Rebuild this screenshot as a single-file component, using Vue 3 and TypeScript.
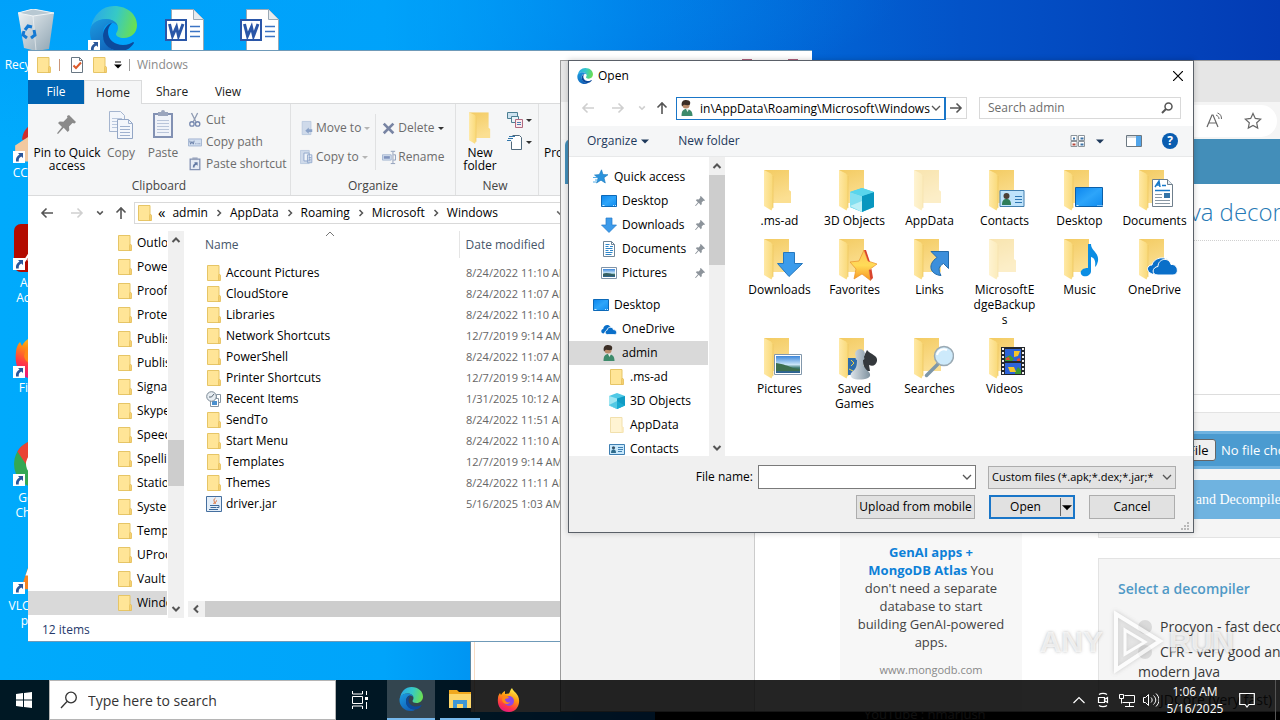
<script setup lang="ts">
import { ref } from 'vue'

interface FileRow { name: string; date: string; icon: string }
interface TreeRow { name: string; icon: string; level: number; pinned?: boolean; selected?: boolean; spaced?: boolean }
interface Tile { name: string; overlay?: string; pale?: boolean }
interface Shortcut { id: string; icon: string; label: string }

const address = ref('in\\AppData\\Roaming\\Microsoft\\Windows')
const query = ref('')
const fileName = ref('')
const search = ref('')

const shortcuts: Shortcut[] = [
  { id: 'bin', icon: 'bin', label: 'Recycle Bin' },
  { id: 'edge-link', icon: 'edge', label: '' },
  { id: 'word-a', icon: 'word', label: '' },
  { id: 'word-b', icon: 'word', label: '' },
  { id: 'ccleaner', icon: 'ccleaner', label: 'CCleaner' },
  { id: 'acrobat', icon: 'acrobat', label: 'Adobe Acrobat' },
  { id: 'firefox-link', icon: 'firefox', label: 'Firefox' },
  { id: 'chrome', icon: 'chrome', label: 'Google Chrome' },
  { id: 'vlc', icon: 'vlc', label: 'VLC media player' },
]

const crumbs = ['admin', 'AppData', 'Roaming', 'Microsoft', 'Windows']

const folders = ['Outlook', 'PowerPoint', 'Proof', 'Protect', 'Publisher', 'Publisher Building', 'Signatures', 'Skype', 'Speech', 'Spelling', 'Stationery', 'SystemCertificates', 'Templates', 'UProof', 'Vault', 'Windows']

const files: FileRow[] = [
  { name: 'Account Pictures', date: '8/24/2022 11:10 AM', icon: 'folder' },
  { name: 'CloudStore', date: '8/24/2022 11:07 AM', icon: 'folder' },
  { name: 'Libraries', date: '8/24/2022 11:10 AM', icon: 'folder' },
  { name: 'Network Shortcuts', date: '12/7/2019 9:14 AM', icon: 'folder' },
  { name: 'PowerShell', date: '8/24/2022 11:07 AM', icon: 'folder' },
  { name: 'Printer Shortcuts', date: '12/7/2019 9:14 AM', icon: 'folder' },
  { name: 'Recent Items', date: '1/31/2025 10:12 AM', icon: 'recent' },
  { name: 'SendTo', date: '8/24/2022 11:51 AM', icon: 'folder' },
  { name: 'Start Menu', date: '8/24/2022 11:10 AM', icon: 'folder' },
  { name: 'Templates', date: '12/7/2019 9:14 AM', icon: 'folder' },
  { name: 'Themes', date: '8/24/2022 11:11 AM', icon: 'folder' },
  { name: 'driver.jar', date: '5/16/2025 1:03 AM', icon: 'jar' },
]

const places: TreeRow[] = [
  { name: 'Quick access', icon: 'quick', level: 0 },
  { name: 'Desktop', icon: 'screen', level: 1, pinned: true },
  { name: 'Downloads', icon: 'down', level: 1, pinned: true },
  { name: 'Documents', icon: 'doc', level: 1, pinned: true },
  { name: 'Pictures', icon: 'photo', level: 1, pinned: true },
  { name: 'Desktop', icon: 'screen', level: 0, spaced: true },
  { name: 'OneDrive', icon: 'cloud', level: 1 },
  { name: 'admin', icon: 'user', level: 1, selected: true },
  { name: '.ms-ad', icon: 'folder', level: 2 },
  { name: '3D Objects', icon: 'cube', level: 2 },
  { name: 'AppData', icon: 'folder-pale', level: 2 },
  { name: 'Contacts', icon: 'contact', level: 2 },
]

const tiles: Tile[] = [
  { name: '.ms-ad' },
  { name: '3D Objects', overlay: 'o-cube' },
  { name: 'AppData', pale: true },
  { name: 'Contacts', overlay: 'o-contact' },
  { name: 'Desktop', overlay: 'o-screen' },
  { name: 'Documents', overlay: 'o-doc' },
  { name: 'Downloads', overlay: 'o-down' },
  { name: 'Favorites', overlay: 'o-star' },
  { name: 'Links', overlay: 'o-link' },
  { name: 'MicrosoftEdgeBackups', pale: true },
  { name: 'Music', overlay: 'o-music' },
  { name: 'OneDrive', overlay: 'o-cloud' },
  { name: 'Pictures', overlay: 'o-photo' },
  { name: 'Saved Games', overlay: 'o-games' },
  { name: 'Searches', overlay: 'o-search' },
  { name: 'Videos', overlay: 'o-film' },
]
</script>

<template>
  <svg class="sprite" aria-hidden="true">
    <defs>
      <linearGradient id="gFlap" x1="0" y1="0" x2="1" y2="0"><stop offset="0" stop-color="#ffe9a6" /><stop offset="1" stop-color="#f9d978" /></linearGradient>
      <linearGradient id="gBack" x1="0" y1="0" x2="0.3" y2="1"><stop offset="0" stop-color="#f3cb62" /><stop offset="1" stop-color="#fbdf92" /></linearGradient>
      <linearGradient id="gEdgeTop" x1="0" y1="0.4" x2="1" y2="0.6"><stop offset="0" stop-color="#2aa9e8" /><stop offset="0.5" stop-color="#36c9c6" /><stop offset="1" stop-color="#6de04c" /></linearGradient>
      <linearGradient id="gEdgeLow" x1="0" y1="0" x2="0.6" y2="1"><stop offset="0" stop-color="#1b9de2" /><stop offset="1" stop-color="#1160b7" /></linearGradient>
      <linearGradient id="gFox" x1="0.7" y1="0" x2="0.3" y2="1"><stop offset="0" stop-color="#fff44f" /><stop offset="0.4" stop-color="#ff980e" /><stop offset="0.75" stop-color="#ff3647" /><stop offset="1" stop-color="#e31587" /></linearGradient>
      <linearGradient id="gScreen" x1="0" y1="0" x2="1" y2="1"><stop offset="0" stop-color="#0c86ee" /><stop offset="0.5" stop-color="#2da5fa" /><stop offset="1" stop-color="#108bee" /></linearGradient>
      <linearGradient id="gPhoto" x1="0" y1="0" x2="0" y2="1"><stop offset="0" stop-color="#3c86da" /><stop offset="0.5" stop-color="#c9e5f8" /><stop offset="0.7" stop-color="#3d7b70" /><stop offset="1" stop-color="#2b5f96" /></linearGradient>
      <linearGradient id="gStar" x1="0" y1="0" x2="0" y2="1"><stop offset="0" stop-color="#ffc35a" /><stop offset="0.5" stop-color="#ffdc58" /><stop offset="1" stop-color="#f7931e" /></linearGradient>
      <linearGradient id="gPawn" x1="0" y1="0" x2="1" y2="0"><stop offset="0" stop-color="#dde4ea" /><stop offset="1" stop-color="#7f929f" /></linearGradient>
      <linearGradient id="gBin" x1="0" y1="0" x2="1" y2="1"><stop offset="0" stop-color="#f1f4f6" /><stop offset="1" stop-color="#8ea4b2" /></linearGradient>
    </defs>

    <symbol id="folder" viewBox="0 0 16 16"><path d="M1.500.5h11.500v9l1 1v5h-12.500z" fill="#ffe597" stroke="#e6c566" /><path d="M12.500 15.500v-5l1-1.500 1 1.500v5z" fill="#f5d071" stroke="#e0b851" stroke-width=".6" /></symbol>
    <symbol id="folder-pale" viewBox="0 0 16 16"><path d="M1.500.5h11.500v9l1 1v5h-12.500z" fill="#fff4d3" stroke="#f1e0ad" /><path d="M12.500 15.500v-5l1-1.500 1 1.500v5z" fill="#fae9bb" /></symbol>
    <symbol id="bigfolder" viewBox="0 0 48 42"><path d="M8 0h25v20l2 1.500V33H15z" fill="url(#gBack)" /><path d="M8 0l7 3.500 2 3V37l-1.500 3.500L8 36z" fill="url(#gFlap)" /><path d="M17 6v32" stroke="#edc65f" stroke-width=".7" /></symbol>

    <symbol id="cube" viewBox="0 0 16 16"><path d="M8 0l8 3v9.500L8 16 0 12.500V3z" fill="#4fc9e6" /><path d="M0 3l8 2.500V16l-8-3.500z" fill="#9ee6f2" /><path d="M8 5.500L16 3v9.500L8 16z" fill="#109bc4" /><path d="M0 12l8-4 8 4.500L8 16z" fill="#22b6da" opacity=".6" /></symbol>
    <symbol id="contact" viewBox="0 0 16 16"><path d="M.5 3.500h15v10H.5z" fill="#c8e8fb" stroke="#3f7fb2" /><path d="M2 12c0-3 1-3.500 2.500-3.500S7 9 7 12z" fill="#2f6c8c" /><circle cx="4.500" cy="6.800" r="1.600" fill="#37546a" /><path d="M9 6.500h5M9 8.500h5M9 10.500h4" stroke="#3f7fb2" /></symbol>
    <symbol id="screen" viewBox="0 0 16 16"><path d="M.5 2.500h15v11H.5z" fill="url(#gScreen)" stroke="#0c69b8" /><path d="M1.500 12.500h2m8.500 0h1m1 0h1" stroke="#cdeaff" /></symbol>
    <symbol id="doc" viewBox="0 0 16 16"><path d="M2.500.5h8l3 3v12h-11z" fill="#fff" stroke="#6f8598" /><path d="M10.500.5v3h3" fill="none" stroke="#6f8598" /><path d="M4.500 3.500h4M4.500 5.500h3M9 5.500h3M4.500 7.500h7M4.500 9.500h3M9 9.500h3M4.500 11.500h7M4.500 13.500h6" stroke="#2f86c9" /></symbol>
    <symbol id="down" viewBox="0 0 16 16"><path d="M5 1h6v7h4.500L8 15.500.5 8H5z" fill="#3d9bea" stroke="#2278c8" stroke-width=".7" /></symbol>
    <symbol id="photo" viewBox="0 0 16 16"><path d="M.5 2.500h15v11H.5z" fill="#fff" stroke="#7e93a8" /><path d="M2 4h12v8H2z" fill="url(#gPhoto)" /><path d="M2 9c3-2 6-1 12 1v1H2z" fill="#355f63" /></symbol>
    <symbol id="cloud" viewBox="0 0 16 16"><path d="M2.500 12.500C-.5 12-.3 8.500 2.200 8 2.500 4 7 2.500 9.500 5.500" fill="#0a6fc9" /><path d="M6.500 13.500c-3 0-3-4-.4-4.300C6.500 5.500 11.500 5 12.300 8.600c4-.2 4.500 4.900 1.200 4.900z" fill="#0a6fc9" stroke="#fff" stroke-width=".8" /></symbol>
    <symbol id="quick" viewBox="0 0 16 16"><path d="M8.500.8l1.500 4.700 5 .2-4 3 1.300 5.300-4.300-2.800L3.500 14l1.600-5L1.500 6l4.800-.4z" fill="#2b93dc" stroke="#1878be" stroke-width=".6" /><path d="M0 8.500h4M2 11h3M0 13h3" stroke="#55aee8" /></symbol>
    <symbol id="user" viewBox="0 0 16 16"><path d="M2.500 16c0-5 1.500-7 5-7s6 2 6 7z" fill="#3d8b6b" /><path d="M7 9l1.500 3L10 9z" fill="#e6f0ea" /><circle cx="7" cy="5" r="3.600" fill="#b98b6a" /><path d="M3 6.500C1.500 1 5 0 7 0c4.500 0 5 3 3.500 5-3 .5-4.500-.5-6 0z" fill="#3b2e26" /></symbol>
    <symbol id="recent" viewBox="0 0 16 16"><path d="M10.500 3.500h4v8h-4z" fill="#fff" stroke="#8796a3" /><path d="M4.500 7.500h8v8h-8z" fill="#fff" stroke="#8796a3" /><path d="M6 10h5v4H6z" fill="#4a90cf" /><circle cx="5.500" cy="5.500" r="4.800" fill="#e7edf2" stroke="#7b8995" /><path d="M5.500 6L8 3M5.500 6H3" stroke="#586673" fill="none" /></symbol>
    <symbol id="jar" viewBox="0 0 16 16"><path d="M.5.5h15v15H.5z" fill="#e4eef8" stroke="#456f9f" /><path d="M9.500 2C6 4.500 10 5.500 7.500 8M11 4.500C9 6 9.500 6.500 9 8" fill="none" stroke="#e0692a" /><path d="M4 9.500h7M4.500 11.500h6M3 13.500h9M11 9.500h2v2h-2" stroke="#3d6999" fill="none" /></symbol>
    <symbol id="pin" viewBox="0 0 12 12"><path d="M7 0l5 5-1 1-1-.3-2 2 .2 2L7 11 4.500 8.200 1 12 0 11.800 3.500 7.500 1 5l1.300-1 2 .2 2-2L6 1z" fill="#8d949b" /></symbol>

    <symbol id="o-cube" viewBox="0 0 48 42"><path d="M31 18l12 4v15l-12 5-12-5V22z" fill="#4cc8e5" /><path d="M19 22l12 4v16l-12-5z" fill="#83dff0" /><path d="M31 26l12-4v15l-12 5z" fill="#0896bf" /><path d="M19 22l12-4 12 4-12 4z" fill="#59d5ec" /><path d="M19 36l12-5v11z" fill="#d6f6f9" opacity=".7" /></symbol>
    <symbol id="o-contact" viewBox="0 0 48 42"><path d="M19 20.500h24v16H19z" fill="#bfe3fb" stroke="#427fae" /><path d="M21 35c0-5 2-6 4.500-6s4.500 1 4.500 6z" fill="#2e7d5a" /><circle cx="25.500" cy="26" r="3" fill="#4c4038" /><path d="M34 26.500h7M34 29.500h7M34 32.500h7" stroke="#2f77b3" /></symbol>
    <symbol id="o-screen" viewBox="0 0 48 42"><path d="M19.500 17.500h27v19h-27z" fill="url(#gScreen)" stroke="#0c5fa8" /><path d="M20.500 35.500h2m19 0h1m1 0h1m1 0h1" stroke="#d5eeff" /></symbol>
    <symbol id="o-doc" viewBox="0 0 48 42"><path d="M21.500 9.500h15l5 5v22h-20z" fill="#fff" stroke="#6f7f8c" /><path d="M36.500 9.500v5h5" fill="#e5ecf2" stroke="#6f7f8c" /><path d="M24 17l4-6 1 6m-4-2h4M31 15.500h4" stroke="#1778c8" stroke-width="1.500" fill="none" /><path d="M24 20.500h15" stroke="#1778c8" stroke-width="1.500" /><path d="M24 24.500h7M24 27.500h7M24 30.500h15M24 33.500h15" stroke="#8a98a4" /><path d="M33 23h6v5h-6z" fill="#3474a8" /></symbol>
    <symbol id="o-down" viewBox="0 0 48 42"><path d="M27.500 13.500h11v11h8L33 37.500 21.500 24.500h6z" fill="#3c9cec" stroke="#2678be" /></symbol>
    <symbol id="o-star" viewBox="0 0 48 42"><path d="M33 11l4 11 9 3-8 6 1.500 10.500L31 35l-8 5 2-10-6-7 9-1z" fill="url(#gStar)" stroke="#e9902a" stroke-width=".7" /><path d="M33 11l4 11 2 1-4-12zM38 31l1.500 10.500L42 39l-1.500-9z" fill="#d9442c" /></symbol>
    <symbol id="o-link" viewBox="0 0 48 42"><path d="M25 12.500h17.500v17l-5-5c-5 3-5.500 6-2.500 12-11-1-14-11-4-18z" fill="#3c8fdb" stroke="#246ba9" /></symbol>
    <symbol id="o-music" viewBox="0 0 48 42"><path d="M32 5h3c0 7 8 8 7 17-1 4-2 5-3 6 1-7-1-9-4-10v14c0 4-4 6-8 5-4-2-3-8 5-8z" fill="#0b8de3" /></symbol>
    <symbol id="o-cloud" viewBox="0 0 48 42"><path d="M21 35c-7-3-5-9 0-9 1-6 12-11 18-3" fill="#0a6fc9" stroke="#fff" /><path d="M27 36c-7 0-6-8 0-8.500 0-8 11-10 13-2 7-1 9 10 2 10.500z" fill="#0a6fc9" stroke="#fff" /></symbol>
    <symbol id="o-photo" viewBox="0 0 48 42"><path d="M18.500 16.500h27v20h-27z" fill="#fff" stroke="#8298ac" /><path d="M20 18h24v17H20z" fill="url(#gPhoto)" /><path d="M20 25c8 1 12 3 17 5l7 1v2H20z" fill="#3d6f4e" /></symbol>
    <symbol id="o-games" viewBox="0 0 48 42"><path d="M17 20h10v17H17z" fill="#2f6dab" /><path d="M20 22l3 3-3 3M18 31l4 2" stroke="#f2d046" fill="none" /><path d="M36 12c4 5 11 5 10 11-1 4-4 6-8 4l1 6h-7l1-6c-6-1-7-5 0-9z" fill="#34383c" /><path d="M29 11a5 5 0 0 1 4 8c1 2 0 3-1 3 0 6 2 9 6 12 2 3 1 5-1 6-5 2-12 2-16 0-2-2-2-4 0-6 4-3 5-6 5-12-1 0-2-1-1-3a5 5 0 0 1 4-8z" fill="url(#gPawn)" /></symbol>
    <symbol id="o-search" viewBox="0 0 48 42"><path d="M32 26L20.500 37.500" stroke="#7f97a8" stroke-width="3.500" stroke-linecap="round" /><circle cx="38" cy="18" r="9.500" fill="#cdeafb" stroke="#9aa9b3" stroke-width="1.500" /><path d="M31 17a7 7 0 0 1 10-5" stroke="#fff" stroke-width="2" fill="none" /></symbol>
    <symbol id="o-film" viewBox="0 0 48 42"><path d="M20 9h24v28H20z" fill="#24282d" /><path d="M24 11h16v12H24zM24 25h16v11H24z" fill="#2e64d8" /><path d="M24 20l5-3 4 4-2 2h-7zM34 34l3-5 3 3v4h-6z" fill="#3e9a33" /><path d="M33 13h6l-2 5-4 1z" fill="#f5c62a" /><path d="M27 29h6l2 5h-6z" fill="#f5c62a" /><path d="M25 20l3-1 1 3h-4zM36 21l3-1v3h-3z" fill="#e04a36" /><path d="M22 10v27M42 10v27" stroke="#f1f1f1" stroke-width="2" stroke-dasharray="2 2" /></symbol>

    <symbol id="edge" viewBox="0 0 48 48"><path d="M2 22C4 9 13 0 25 0c14 0 23 9 23 19 0 8-6 13-13 13-5 0-8-2-8-4 0-1 2-3 2-6 0-5-5-9-12-9C10 13 4 17 2 22z" fill="url(#gEdgeTop)" /><path d="M1 26c0-8 7-13 16-13 7 0 12 4 12 9 0-3-3-5-6-5-5 0-9 4-9 11 0 10 8 18 19 17-3 2-6 3-9 3C10 48 1 38 1 26z" fill="url(#gEdgeLow)" /><path d="M14 30c0-6 4-12 9-13-3 3-4 6-4 9 0 8 7 13 15 13 5 0 8-2 10-3 1 0 1 1 1 1-3 5-8 8-13 8-10 0-18-6-18-15z" fill="#0c4a9c" /></symbol>
    <symbol id="firefox" viewBox="0 0 24 24"><path d="M15 0c1 3 4 4 6 8 3 6 0 16-9 16S0 17 1 10c0-2 1-4 2-5l1 2c1-2 2-3 4-4v3l4-.5C13 4 13 2 15 0z" fill="url(#gFox)" /><circle cx="12" cy="13" r="5" fill="#8b47e8" /><path d="M6 8c3-1 5 0 6 2l-4 1c0 3 3 4 5 3-1 3-7 3-8-2z" fill="#ff8a16" /></symbol>
    <symbol id="bin" viewBox="0 0 40 42"><path d="M2 4l15-4 21 4-5 36-13 2-12-3z" fill="url(#gBin)" /><path d="M2 4l15 3 21-3-21-4z" fill="#b8c8d2" stroke="#eef3f6" /><path d="M17 7l3 35" stroke="#fff" opacity=".5" /><path d="M9 21l3-4 4 1m2 3l1 5-4 3m-4 0l-4-3 1-4" fill="none" stroke="#1479d3" stroke-width="3" /></symbol>
    <symbol id="word" viewBox="0 0 40 42"><path d="M6.500.5h22l10 10V42h-32z" fill="#fff" stroke="#9aa9b5" /><path d="M28.500.5v10h10" fill="#e6ebef" stroke="#9aa9b5" /><path d="M25 17.500h10M25 22.500h10M25 27.500h10" stroke="#3c74c4" stroke-width="1.500" /><path d="M1 11h20v20H1z" fill="#fff" stroke="#2a56a8" stroke-width="2" /><path d="M4.500 15l3 12 4-9 2 9 4.500-12" fill="none" stroke="#2a56a8" stroke-width="3" /></symbol>
    <symbol id="ccleaner" viewBox="0 0 42 42"><path d="M7 20C8 8 18 2 36 0v20z" fill="#d22d2a" /><path d="M1 25l12-8 20 8v14H1z" fill="#f2c9a0" /></symbol>
    <symbol id="acrobat" viewBox="0 0 42 42"><rect width="42" height="42" rx="6" fill="#b30b00" /><path d="M8 34c4-6 10-12 12-24M12 32c8-4 16-4 20 0" stroke="#fff" stroke-width="2" fill="none" /></symbol>
    <symbol id="chrome" viewBox="0 0 42 42"><circle cx="21" cy="21" r="21" fill="#34a853" /><path d="M3 10a21 21 0 0 1 36 0H21l-8 15z" fill="#ea4335" /><circle cx="21" cy="21" r="9" fill="#4285f4" stroke="#fff" stroke-width="3" /></symbol>
    <symbol id="vlc" viewBox="0 0 42 42"><path d="M18 0h6l12 36H6z" fill="#f58220" /><path d="M13 16h16l3 8H10z" fill="#fff" /></symbol>
    <symbol id="arrowbadge" viewBox="0 0 12 12"><path d="M0 0h12v12H0z" fill="#fff" /><path d="M5 2h5v5L8.300 5.400C6 6.500 5.500 8 5.800 10.500H3C2.500 7 4 5 6.500 3.600z" fill="#2b579a" /></symbol>

    <symbol id="chev-down" viewBox="0 0 10 10"><path d="M1 3l4 4 4-4" fill="none" stroke="currentColor" stroke-width="1.300" /></symbol>
    <symbol id="chev-bold" viewBox="0 0 10 10"><path d="M1.500 3L5 6.500 8.500 3" fill="none" stroke="currentColor" stroke-width="2" /></symbol>
    <symbol id="caret" viewBox="0 0 8 8"><path d="M0 2.500h8L4 6.500z" fill="currentColor" /></symbol>
    <symbol id="arrow" viewBox="0 0 14 14"><path d="M13 7H2M6.500 2.500L2 7l4.500 4.500" fill="none" stroke="currentColor" stroke-width="1.600" /></symbol>
    <symbol id="magnifier" viewBox="0 0 14 14"><circle cx="8.500" cy="5.500" r="3.500" fill="none" stroke="currentColor" stroke-width="1.500" /><path d="M6 8L2 12" stroke="currentColor" stroke-width="2" /></symbol>
  </svg>

  <main class="desktop">
    <div v-for="s in shortcuts" :key="s.id" class="shortcut" :class="s.id">
      <svg class="shortcut-icon"><use :href="'#' + s.icon" /></svg>
      <svg v-if="s.icon !== 'bin' && s.icon !== 'word'" class="badge"><use href="#arrowbadge" /></svg>
      <span>{{ s.label }}</span>
    </div>

    <div class="back-window"></div>
    <div class="dark-window">YouTube : nmarjusn</div>

    <section class="explorer" aria-label="Windows">
      <header class="ex-title">
        <svg class="i16"><use href="#folder" /></svg>
        <i class="bar warm"></i>
        <svg class="i16" viewBox="0 0 16 16"><path d="M2.500.5h8l3 3v12h-11z" fill="#fff" stroke="#697783" /><path d="M10.500.5v3h3" fill="none" stroke="#697783" /><path d="M4.500 8.500L7 11l5-5.500" fill="none" stroke="#dc5a2b" stroke-width="2" /></svg>
        <svg class="i16"><use href="#folder" /></svg>
        <svg class="i8" viewBox="0 0 8 8"><path d="M1 1h6" stroke="#000" /><path d="M0 3.500h8L4 7.500z" /></svg>
        <i class="bar"></i>
        <span class="ex-name">Windows</span>
        <div class="ex-controls"><i></i><i></i></div>
      </header>
      <nav class="tabs">
        <button class="tab file">File</button>
        <button class="tab home">Home</button>
        <button class="tab share">Share</button>
        <button class="tab view">View</button>
      </nav>
      <div class="ribbon">
        <div class="group clip">
          <div class="tools">
            <button class="big pinbig"><svg viewBox="0 0 24 32"><path d="M14 6l7 7-1.500 1.500-2-.4-3.500 3.500.3 3.700-1.600 1.700-4-4.200L3 25l-1-.8 5-6.200-4-4 1.700-1.500 3.700.2 4-4-.4-1.700z" fill="#8a8a8a" /></svg><span>Pin to Quick access</span></button>
            <button class="big off copy"><svg viewBox="0 0 26 32"><path d="M1.500 2.500h11l4 4v16h-15z" fill="#f3f6fb" stroke="#a5b5cf" /><path d="M4 9.500h10M4 12.500h10M4 15.500h10M4 18.500h10" stroke="#b9c7dd" /><path d="M9.500 10.500h11l4 4v15h-15z" fill="#f3f6fb" stroke="#93a6c5" /><path d="M20.500 10.500v4h4M12 17.500h10M12 20.500h10M12 23.500h10M12 26.500h10" stroke="#9fb1cf" fill="none" /></svg><span>Copy</span></button>
            <button class="big off paste"><svg viewBox="0 0 24 32"><path d="M3 5h18v23H3z" fill="#f0f3f9" stroke="#8291b3" stroke-width="2" /><path d="M7 3h3a2 2 0 0 1 4 0h3v4H7z" fill="#9aa5bd" /><path d="M6 11.500h12M6 14.500h12M6 17.500h12M6 20.500h12M6 23.500h12" stroke="#b9c5da" /></svg><span>Paste</span></button>
            <div class="stack three">
              <button class="small off"><svg viewBox="0 0 16 16"><path d="M4 0l5 10M11 0L6 10" stroke="#8f9bb3" stroke-width="1.500" /><circle cx="4.500" cy="12.500" r="2.500" fill="none" stroke="#7789b0" stroke-width="1.500" /><circle cx="11" cy="12.500" r="2.500" fill="none" stroke="#7789b0" stroke-width="1.500" /></svg>Cut</button>
              <button class="small off"><svg viewBox="0 0 16 16"><path d="M.5 4.500h15v8H.5z" fill="#d3dff0" stroke="#9db0ce" /><path d="M2 6.500l1 4 1.500-3L6 10.500l1-4M8.500 10h1m1.500 0h1m1 0h1" stroke="#6279a4" fill="none" /></svg>Copy path</button>
              <button class="small off"><svg viewBox="0 0 16 16"><path d="M2.500 2.500h11v12h-11z" fill="#e6ebf5" stroke="#8291b3" stroke-width="1.500" /><path d="M5 .5h6v3H5z" fill="#9aa5bd" /><path d="M5.500 12c0-3 1-4 2.500-5L7 6h4v4L9.500 8.800C8 9.500 7.500 10 7.500 12z" fill="#6279a4" /></svg>Paste shortcut</button>
            </div>
          </div>
          <div class="caption">Clipboard</div>
        </div>
        <div class="group org">
          <div class="tools">
            <div class="stack two">
              <button class="small off"><svg viewBox="0 0 16 16"><path d="M2.500.5h10v15h-10z" fill="#cfdaea" stroke="#b8c8de" /><path d="M14 9.500v3h-4v2L6 11l4-3.500v2z" fill="#8aa2c8" /></svg>Move to<svg class="i8 pale"><use href="#caret" /></svg></button>
              <button class="small off"><svg viewBox="0 0 16 16"><path d="M.5.5h10v15H.5z" fill="#cfdaea" stroke="#b8c8de" /><path d="M4.500 3.500h6v9h-6zM8.500 5.500h5v9h-5z" fill="#f1f5fa" stroke="#8aa2c8" /><path d="M10 8.500h3M10 10.500h3M10 12.500h3" stroke="#8aa2c8" /></svg>Copy to<svg class="i8 pale"><use href="#caret" /></svg></button>
            </div>
            <i class="rule"></i>
            <div class="stack two">
              <button class="small off"><svg viewBox="0 0 16 16"><path d="M2 3l11 11M13 3L2 14" stroke="#7884a3" stroke-width="3" /></svg>Delete<svg class="i8"><use href="#caret" /></svg></button>
              <button class="small off"><svg viewBox="0 0 16 16"><path d="M.5 5.500h10v6H.5z" fill="#dae4f2" stroke="#9db0ce" /><path d="M2 8.500h7" stroke="#7f93bd" stroke-width="3" /><path d="M12.500 2v13M10 1.500h2.500H15M10 15.500h5M13 5.500h2.500v6H13" stroke="#8797b5" fill="none" /></svg>Rename</button>
            </div>
          </div>
          <div class="caption">Organize</div>
        </div>
        <div class="group new">
          <div class="tools">
            <button class="big newf"><svg viewBox="8 -4 28 46"><use href="#bigfolder" width="48" height="42" /></svg><span>New folder</span></button>
            <div class="stack three">
              <button class="small mini" aria-label="New item"><svg viewBox="0 0 16 16"><path d="M.5.5h10v6H.5z" fill="#cde2ef" stroke="#4c7f92" /><path d="M4.500 4.500h7v6h-7z" fill="#e9f2f7" stroke="#4c7f92" /><path d="M8.500 7.500h7v8h-7z" fill="#fbe9ec" stroke="#b06a80" /><path d="M10 10.500h4M10 12.500h4" stroke="#4c7fb2" /></svg><svg class="i8"><use href="#caret" /></svg></button>
              <button class="small mini" aria-label="Easy access"><svg viewBox="0 0 16 16"><path d="M5.500 1.500h7l2 2v12h-10v-8" fill="#fff" stroke="#50697c" /><path d="M2 2.500h6M1 4.500h5M0 6.500h4" stroke="#3276aa" /></svg><svg class="i8"><use href="#caret" /></svg></button>
            </div>
          </div>
          <div class="caption">New</div>
        </div>
        <div class="group props"><button class="big"><i></i><span>Properties</span></button></div>
      </div>
      <div class="ex-nav">
        <button aria-label="Back" class="g1"><svg class="i14"><use href="#arrow" /></svg></button>
        <button aria-label="Forward" class="g2"><svg class="i14 flip"><use href="#arrow" /></svg></button>
        <button aria-label="Recent" class="g3"><svg class="i8"><use href="#chev-bold" /></svg></button>
        <button aria-label="Up" class="g4"><svg class="i14 up"><use href="#arrow" /></svg></button>
        <div class="crumbs">
          <svg class="i16"><use href="#folder" /></svg>
          <span class="dbl">«</span>
          <template v-for="(c, i) in crumbs" :key="c">
            <svg v-if="i" class="sep" viewBox="0 0 6 8"><path d="M1.500 1l3 3-3 3" fill="none" stroke="#555" stroke-width="1.500" /></svg>
            <a href="#">{{ c }}</a>
          </template>
          <svg class="i8 crumbs-drop"><use href="#chev-bold" /></svg>
        </div>
      </div>
      <div class="ex-body">
        <ul class="ex-tree">
          <li v-for="(f, i) in folders" :key="f" :class="{ on: i === folders.length - 1 }">
            <svg class="i16"><use href="#folder" /></svg>{{ f }}
          </li>
        </ul>
        <div class="vscroll ex-v">
          <svg class="i10 flip"><use href="#chev-bold" /></svg>
          <i class="thumb"></i>
          <svg class="i10"><use href="#chev-bold" /></svg>
        </div>
        <div class="ex-list">
          <table>
            <thead><tr><th class="c1"><span>Name</span><svg class="sort" viewBox="0 0 10 6"><path d="M1 5l4-4 4 4" fill="none" stroke="#777" /></svg></th><th>Date modified</th></tr></thead>
            <tbody>
              <tr v-for="f in files" :key="f.name">
                <td class="c1"><svg class="i16"><use :href="'#' + f.icon" /></svg>{{ f.name }}</td>
                <td class="date">{{ f.date }}</td>
              </tr>
            </tbody>
          </table>
          <div class="hscroll"><svg class="i10 left"><use href="#chev-bold" /></svg><i></i></div>
        </div>
      </div>
      <footer class="status">12 items</footer>
    </section>

    <section class="browser" aria-label="Browser">
      <div class="strip"></div>
      <div class="toolbar">
        <div class="omni">
          <svg class="i18" viewBox="0 0 18 18"><path d="M2 15L7 3h1l5 12M4 11h7" fill="none" stroke="#666" stroke-width="1.200" /><path d="M11 3c2 1 3 2 3 4M12.500 1c3 1 4 3 4 6" fill="none" stroke="#666" /></svg>
          <svg class="i18" viewBox="0 0 18 18"><path d="M9 1.500l2.300 4.900 5.400.7-4 3.700 1 5.300L9 13.500l-4.700 2.600 1-5.300-4-3.700 5.400-.7z" fill="none" stroke="#666" stroke-width="1.200" /></svg>
        </div>
      </div>
      <div class="page">
        <div class="masthead"></div>
        <div class="columns">
          <aside class="side"></aside>
          <div class="ad">
            <p><a href="#">GenAI apps + MongoDB&nbsp;Atlas</a> You don't need a separate database to start building GenAI&#8209;powered apps.</p>
            <small>www.mongodb.com</small>
          </div>
          <div class="content">
            <h1>Java decompiler online</h1>
            <div class="blank"></div>
            <div class="panel upload">
              <div class="chooser"><button>Choose File</button><span>No file chosen</span></div>
              <button class="go">Upload and Decompile</button>
            </div>
            <div class="panel picks">
              <h2>Select a decompiler</h2>
              <label><input type="radio" name="engine" />Procyon - fast decompiler</label>
              <label><input type="radio" name="engine" />CFR - very good and well</label>
              <div class="wrapped">modern Java</div>
              <label class="jd"><input type="radio" name="engine" />JDCore (very fast)</label>
            </div>
          </div>
        </div>
      </div>
    </section>

    <section class="dialog" role="dialog" aria-label="Open">
      <header class="dl-title"><svg class="i16"><use href="#edge" /></svg><span>Open</span>
        <button aria-label="Close"><svg class="i10" viewBox="0 0 10 10"><path d="M0 0l10 10M10 0L0 10" stroke="#000" stroke-width="1.200" /></svg></button></header>
      <div class="dl-nav">
        <button aria-label="Back" class="dim"><svg class="i14"><use href="#arrow" /></svg></button>
        <button aria-label="Forward" class="dim n2"><svg class="i14 flip"><use href="#arrow" /></svg></button>
        <button aria-label="Recent" class="dim n3"><svg class="i8"><use href="#chev-bold" /></svg></button>
        <button aria-label="Up" class="n4"><svg class="i14 up"><use href="#arrow" /></svg></button>
        <div class="path"><svg class="i16"><use href="#user" /></svg><input v-model="address" aria-label="Address" /><svg class="i10"><use href="#chev-down" /></svg></div>
        <button aria-label="Go" class="gobtn"><svg class="i14 flip"><use href="#arrow" /></svg></button>
        <div class="find"><input v-model="query" aria-label="Search admin" placeholder="Search admin" /><svg class="i14"><use href="#magnifier" /></svg></div>
      </div>
      <div class="dl-bar">
        <button>Organize <svg class="i8"><use href="#caret" /></svg></button>
        <button class="newfolder">New folder</button>
        <span class="grow"></span>
        <button aria-label="View" class="viewbtn"><svg class="i16" viewBox="0 0 16 16"><path d="M1 2.500h6v5H1zM8.500 2.500h6v5h-6zM1 8.500h6v5H1zM8.500 8.500h6v5h-6z" fill="#fff" stroke="#8c949b" /><path d="M3 5.500h2M10.500 5.500h3M10.500 11.500h3" stroke="#3d74a8" stroke-width="2" /><path d="M2.500 11.500h3" stroke="#b5483c" stroke-width="2" /></svg><svg class="i8"><use href="#caret" /></svg></button>
        <button aria-label="Preview pane"><svg class="i16" viewBox="0 0 16 16"><path d="M.5 2.500h15v11H.5z" fill="#fff" stroke="#6c7882" /><path d="M10 3h5v10h-5z" fill="#52a5ea" /><path d="M1 4h9" stroke="#a8b4bf" /></svg></button>
        <button aria-label="Help" class="help">?</button>
      </div>
      <div class="dl-body">
        <ul class="dl-tree">
          <li v-for="(p, i) in places" :key="i" :class="['l' + p.level, { on: p.selected, spaced: p.spaced }]">
            <svg class="i16"><use :href="'#' + p.icon" /></svg><span>{{ p.name }}</span>
            <svg v-if="p.pinned" class="i10 pin"><use href="#pin" /></svg>
          </li>
        </ul>
        <div class="vscroll dl-v">
          <svg class="i10 flip"><use href="#chev-bold" /></svg>
          <i class="thumb"></i>
          <svg class="i10"><use href="#chev-bold" /></svg>
        </div>
        <div class="tiles">
          <figure v-for="t in tiles" :key="t.name" :class="{ pale: t.pale }">
            <svg viewBox="0 0 48 42"><use href="#bigfolder" /><use v-if="t.overlay" :href="'#' + t.overlay" /></svg>
            <figcaption>{{ t.name }}</figcaption>
          </figure>
        </div>
      </div>
      <div class="dl-foot">
        <div class="frow">
          <label for="fname">File name:</label>
          <div class="combo"><input id="fname" v-model="fileName" /><svg class="i10"><use href="#chev-down" /></svg></div>
          <div class="types"><select aria-label="File type"><option>Custom files (*.apk;*.dex;*.jar;*.class)</option></select><svg class="i10"><use href="#chev-down" /></svg></div>
        </div>
        <div class="frow brow">
          <button class="btn wide">Upload from mobile</button>
          <button class="btn open"><span>Open</span><i></i><svg class="i10"><use href="#caret" /></svg></button>
          <button class="btn">Cancel</button>
        </div>
        <svg class="grip" viewBox="0 0 9 9"><path d="M6 1h2M3 4h2M6 4h2M0 7h2M3 7h2M6 7h2" stroke="#b8b8b8" stroke-width="2" /></svg>
      </div>
    </section>

    <div class="mark" aria-hidden="true">
      <span>ANY</span>
      <svg viewBox="0 0 56 64"><path d="M8 4l44 27L8 60z" fill="#cfcfcf" fill-opacity=".3" stroke="#fff" stroke-width="4" /><path d="M17 20l20 12-20 12z" fill="none" stroke="#fff" stroke-width="3" /></svg>
      <span>RUN</span>
    </div>

    <footer class="taskbar">
      <button class="start" aria-label="Start"><svg class="i16" viewBox="0 0 16 16"><path d="M0 2l7-1v6.500H0zM8 1l8-1v7.500H8zM0 8.500h7V15l-7-1zM8 8.500h8V16l-8-1z" fill="#fff" /></svg></button>
      <label class="searchbox"><svg class="i18" viewBox="0 0 18 18"><circle cx="11" cy="6.500" r="5.300" fill="none" stroke="#333" stroke-width="1.300" /><path d="M7 10.500L1 17" stroke="#333" stroke-width="1.300" /></svg><input v-model="search" aria-label="Type here to search" placeholder="Type here to search" /></label>
      <button class="tb-item view" aria-label="Task view"><svg class="i18" viewBox="0 0 18 18"><path d="M1.500 0v3h10V0M1.500 18v-3h10v3M1.500 5.500h10v7h-10zM15.500 0v4M15.500 11v7" fill="none" stroke="#fff" /><path d="M14 6h3v3h-3z" fill="#fff" /></svg></button>
      <button class="tb-item active" aria-label="Edge"><svg class="i24"><use href="#edge" /></svg></button>
      <button class="tb-item running" aria-label="File Explorer"><svg class="i24" viewBox="0 0 24 24"><path d="M1 3h8l2 2h12v16H1z" fill="#f0a81e" /><path d="M1 7h22v14H1z" fill="#fdd669" /><path d="M5 21v-8h14v8h-4v-4H9v4z" fill="#3f97d6" /></svg></button>
      <button class="tb-item ff" aria-label="Firefox"><svg class="i24"><use href="#firefox" /></svg></button>
      <span class="grow"></span>
      <div class="tray">
        <svg class="i16" viewBox="0 0 16 16"><path d="M2.500 11L8 5.500l5.500 5.500" fill="none" stroke="#fff" stroke-width="1.200" /></svg>
        <svg class="i16" viewBox="0 0 16 16"><path d="M4 2.500c2-1.500 6-1.500 8 0M4 13.500c2 1.500 6 1.500 8 0M3.500 5.500h6v5h-6zM9.500 7.500l3-2v5l-3-2" fill="none" stroke="#fff" stroke-width="1.200" /></svg>
        <svg class="i16" viewBox="0 0 16 16"><path d="M5.500 3.500h10v7h-12M10.500 10.500v4M6 14.500h9M.5 2.500h4v4h-4zM2.500 6.500v5" fill="none" stroke="#fff" /></svg>
        <svg class="i16" viewBox="0 0 16 16"><path d="M.5 5.500h2l3-3v11l-3-3h-2zM8 5.500c1.500 1.500 1.500 3.500 0 5M10.500 3.500c3 3 3 6 0 9M13 1.500c4 4 4 9 0 13" fill="none" stroke="#fff" /></svg>
      </div>
      <div class="clock"><span>1:06 AM</span><span>5/16/2025</span></div>
      <button class="notify" aria-label="Notifications"><svg class="i16" viewBox="0 0 16 16"><path d="M.7 1.500h14.600v11H10L8 15l-2-2.500H.7z" fill="none" stroke="#fff" stroke-width="1.200" /></svg></button>
      <i class="peek"></i>
    </footer>
  </main>
</template>

<style>
html, body { margin: 0; height: 100%; overflow: hidden; }
</style>

<style scoped>
.desktop {
  position: relative; width: 100%; height: 100vh; overflow: hidden;
  font-family: "Open Sans", "Noto Sans", sans-serif; font-size: 12px; line-height: 16px; color: #000;
  background:
    radial-gradient(ellipse 900px 140px at 0 0, rgba(0, 160, 250, .9), rgba(0, 150, 250, 0)),
    linear-gradient(90deg, #00aafc 0, #00a4fa 30%, #0078e4 50%, #0353c8 75%, #033bb4 100%);
}
.desktop * { box-sizing: border-box; }
.sprite { position: absolute; width: 0; height: 0; }
button, input, select { font: inherit; color: inherit; margin: 0; padding: 0; border: 0; background: none; }
input:focus { outline: none; }
a { color: inherit; text-decoration: none; }
ul { list-style: none; margin: 0; padding: 0; }
svg { display: block; flex: none; }
.i8 { width: 8px; height: 8px; }
.i10 { width: 10px; height: 10px; }
.i14 { width: 14px; height: 14px; }
.i16 { width: 16px; height: 16px; }
.i18 { width: 18px; height: 18px; }
.i24 { width: 24px; height: 24px; }
.flip { transform: rotate(180deg); }
.up { transform: rotate(90deg); }
.left { transform: rotate(90deg); }
.grow { flex: 1; }

.shortcut { position: absolute; display: flex; flex-direction: column; align-items: center; width: 76px; text-align: center; color: #fff; line-height: 15px; }
.shortcut-icon { width: 48px; height: 48px; }
.badge { position: absolute; left: 13px; top: 34px; width: 12px; height: 12px; }
.bin { left: -2px; top: 9px; gap: 6px; }
.bin .shortcut-icon, .word-a .shortcut-icon, .word-b .shortcut-icon { height: 42px; }
.edge-link { left: 75px; top: 6px; }
.word-a { left: 147px; top: 9px; }
.word-b { left: 222px; top: 9px; }
.ccleaner { left: 0; top: 117px; }
.acrobat { left: 0; top: 224px; gap: 3px; }
.firefox-link { left: 0; top: 332px; }
.chrome { left: 0; top: 440px; gap: 2px; }
.vlc { left: 0; top: 548px; gap: 2px; }

.back-window { position: absolute; left: 470px; right: 30%; top: 600px; bottom: 8px; background: #fff; border-left: 1px solid #5b8aa8; box-shadow: inset 3px 0 #fff, inset 4px 0 #f8dcc4; }
.dark-window { position: absolute; left: 655px; right: 0; bottom: 0; height: 20px; padding: 8px 0 0 209px; background: #050505; color: #777; overflow: hidden; font-size: 13px; line-height: 12px; }

.explorer { position: absolute; left: 28px; right: 468px; top: 50px; bottom: 78px; display: flex; flex-direction: column; background: #fff; border: 1px solid #6f9ab8; border-width: 1px 0; }
.ex-title { display: flex; align-items: center; height: 29px; padding: 0 0 2px 8px; flex: none; }
.bar { width: 1px; height: 12px; background: #9a9a9a; margin: 0 9px 0 7px; }
.bar.warm { background: #c9957a; }
.ex-title .i16 + .i16 { margin-left: 7px; }
.ex-title .i8 { margin-left: 6px; }
.ex-title .i8 + .bar { margin: 0 7px; }
.ex-name { color: #8a8a8a; }
.ex-controls { display: flex; gap: 36px; margin: 0 14px 18px auto; align-self: flex-end; }
.ex-controls i { width: 10px; height: 1px; background: #b0607c; }
.tabs { display: flex; height: 24px; flex: none; border-bottom: 1px solid #dadbdc; }
.tab { height: 24px; color: #222; }
.tab.file { width: 56px; background: #0063b1; color: #fff; }
.tab.home { width: 58px; background: #f5f6f7; border: 1px solid #dadbdc; border-bottom: 0; }
.tab.share { width: 60px; }
.tab.view { width: 52px; }
.ribbon { display: flex; height: 92px; flex: none; background: #f5f6f7; border-bottom: 1px solid #dadbdc; overflow: hidden; }
.group { display: flex; flex-direction: column; justify-content: space-between; border-right: 1px solid #e0e1e2; padding-bottom: 1px; flex: none; }
.tools { display: flex; padding-top: 5px; }
.caption { text-align: center; color: #444; }
.clip { width: 263px; }
.org { width: 165px; }
.new { width: 83px; }
.big { display: flex; flex-direction: column; align-items: center; line-height: 13px; }
.big svg { width: 26px; height: 32px; margin-bottom: 5px; }
.pinbig { width: 72px; margin-left: 3px; }
.copy { width: 40px; margin-left: -2px; }
.paste { width: 44px; }
.off { color: #6c6c6c; }
.small { display: flex; align-items: center; gap: 4px; white-space: nowrap; }
.small svg:first-child { width: 14px; height: 16px; }
.stack { display: flex; flex-direction: column; }
.three .small { height: 22px; }
.three { margin-left: 3px; }
.two { padding-top: 4px; }
.two .small { height: 29px; gap: 2px; }
.org .tools { padding-left: 9px; }
.i8.pale { color: #aaa; }
.small .i8 { color: #333; width: 6px; margin-left: 1px; }
.small .i8.pale { color: #b5b5b5; }
.rule { width: 1px; height: 56px; background: #e0e1e2; margin: 5px 6px 0 5px; }
.newf { width: 48px; }
.newf svg { width: 28px; height: 36px; margin-bottom: 1px; }
.new .caption { padding-right: 4px; }
.mini { gap: 2px; }
.mini svg:first-child { width: 16px; }
.props { border: 0; padding-left: 5px; }
.props .big i { height: 42px; }
.ex-nav { display: flex; align-items: center; height: 34px; flex: none; margin-bottom: 1px; padding-left: 12px; color: #555; }
.g2 { margin-left: 16px; color: #d0d0d0; }
.g3 { margin-left: 12px; }
.g4 { margin-left: 10px; }
.crumbs { display: flex; align-items: center; flex: 1; height: 22px; margin-left: 6px; padding: 0 230px 0 2px; border: 1px solid #d9d9d9; color: #000; white-space: nowrap; overflow: hidden; }
.dbl { margin: 0 7px 2px 5px; font-size: 15px; }
.sep { width: 6px; height: 8px; margin: 0 8px; }
.crumbs-drop { margin-left: 58px; color: #666; }
.ex-body { display: flex; flex: 1; min-height: 0; }
.ex-tree { width: 139px; margin-right: 1px; overflow: hidden; flex: none; }
.ex-tree li { display: flex; align-items: center; gap: 4px; height: 24px; padding-left: 89px; white-space: nowrap; }
.ex-tree li.on { background: #d9d9d9; }
.vscroll { display: flex; flex-direction: column; align-items: center; width: 16px; background: #f0f0f0; color: #555; flex: none; padding: 4px 0; }
.thumb { width: 16px; margin-bottom: auto; background: #cdcdcd; }
.ex-v .thumb { height: 46px; margin-top: 195px; }
.ex-list { display: flex; flex-direction: column; flex: 1; min-width: 0; padding-left: 4px; overflow: hidden; }
table { border-collapse: collapse; table-layout: fixed; width: 100%; }
th { height: 27px; padding: 0 0 0 6px; text-align: left; font-weight: 400; color: #46566a; position: relative; }
th.c1 { border-right: 1px solid #e5e5e5; }
.c1 { width: 271px; }
th.c1 { padding-left: 17px; }
.sort { position: absolute; right: 124px; top: 0; width: 10px; height: 6px; }
tbody::before { content: ""; display: block; height: 4px; }
td { height: 21px; padding: 0 0 0 7px; white-space: nowrap; }
td.c1 { display: flex; align-items: center; gap: 4px; padding-left: 18px; }
td.date { color: #666; padding-left: 7px; font-size: 11px; }
.hscroll { display: flex; align-items: center; height: 16px; margin-top: auto; margin-bottom: 1px; background: #f0f0f0; color: #555; padding-left: 3px; gap: 4px; flex: none; }
.hscroll i { flex: 1; height: 16px; background: #cdcdcd; }
.status { height: 23px; flex: none; padding: 4px 14px; color: #26396b; }

.browser { position: absolute; left: 560px; right: -100px; top: 60px; bottom: 8px; display: flex; flex-direction: column; background: #f3f3f3; border: 1px solid #9b9b9b; }
.strip { height: 41px; background: #e6e6e6; flex: none; }
.toolbar { height: 37px; background: #f5f5f5; flex: none; padding: 3px 102px 2px 60px; }
.omni { display: flex; align-items: center; justify-content: flex-end; gap: 21px; height: 32px; border-radius: 16px; background: #fff; padding-right: 15px; }
.page { flex: 1; margin-left: 4px; background: #fff; overflow: hidden; border-radius: 6px 0 0 0; }
.masthead { height: 45px; background: #438eb9; }
.columns { display: flex; height: 100%; }
.side { width: 190px; background: #f2f2f2; border-right: 1px solid #ccc; flex: none; }
.ad { width: 182px; flex: none; margin: 0 76px 0 85px; padding: 359px 14px 0; background: #f7f7f7; text-align: center; font-size: 13px; line-height: 18px; color: #444; }
.ad p { margin: 0 0 9px; }
.ad a { color: #0d80d8; font-weight: 700; }
.ad small { font-size: 11px; color: #888; }
.content { flex: 1; font-size: 14px; line-height: 20px; color: #393939; min-width: 0; }
h1 { margin: 0; height: 57px; padding: 14px 0 0 73px; font-size: 24px; line-height: 28px; font-weight: 300; color: #2679b5; border-bottom: 1px dotted #d0d0d0; white-space: nowrap; }
.blank { height: 154px; border-bottom: 1px solid #ddd; margin-bottom: 17px; }
.panel { background: #f5f5f5; border: 1px solid #e3e3e3; }
.upload { height: 126px; padding-top: 18px; margin-bottom: 20px; }
.chooser { display: flex; align-items: center; height: 38px; background: #4b9bd0; border: solid #6fb3e0; border-width: 3px 0; color: #fff; gap: 5px; white-space: nowrap; font-size: 13px; }
.chooser button { width: 84px; height: 22px; margin-left: 33px; background: #efefef; border: 1px solid #666; border-radius: 3px; color: #000; }
.go { display: block; width: 100%; height: 39px; margin-top: 11px; padding-left: 52px; background: #6fb3e0; color: #fff; font: 14px "Liberation Serif", serif; text-align: left; white-space: nowrap; }
.picks { height: 200px; padding: 20px 0 0 39px; white-space: nowrap; }
h2 { margin: 0 0 15px -20px; font-size: 14px; line-height: 20px; font-weight: 600; color: #4f99c6; }
.picks label { display: flex; align-items: center; height: 25px; gap: 8px; }
.picks input { appearance: none; width: 14px; height: 14px; border-radius: 7px; background: #dadada; }
.wrapped { line-height: 16px; margin-bottom: 7px; }

.dialog { position: absolute; left: 568px; right: 86px; top: 60px; display: flex; flex-direction: column; background: #fff; border: 1px solid #5a6068; box-shadow: 0 0 6px rgba(0, 0, 0, .2); }
.dl-title { display: flex; align-items: center; height: 30px; padding: 0 10px 0 8px; gap: 5px; }
.dl-title button { margin-left: auto; }
.dl-nav { display: flex; align-items: center; height: 34px; padding: 0 12px 0 12px; color: #555; }
.dim { color: #cfcfcf; }
.n2 { margin-left: 16px; }
.n3 { margin-left: 13px; }
.n4 { margin-left: 9px; }
.path { display: flex; align-items: center; width: 270px; height: 23px; margin-left: 7px; padding: 0 3px 0 2px; border: 2px solid #1a76c8; border-width: 1px 2px 1px 1px; }
.path input { flex: 1; min-width: 0; height: 20px; margin-left: 5px; color: #000; }
.gobtn { display: flex; align-items: center; justify-content: center; width: 21px; height: 22px; border: 1px solid #d9d9d9; border-left: 0; }
.find { display: flex; align-items: center; flex: 1; height: 22px; margin-left: 12px; padding: 0 6px 0 8px; border: 1px solid #d9d9d9; }
.find input { flex: 1; min-width: 0; }
.find input::placeholder { color: #6d6d6d; opacity: 1; }
.dl-bar { display: flex; align-items: center; height: 31px; margin-top: 1px; padding: 0 15px 0 18px; background: #f5f6f7; border-bottom: 1px solid #e8e9ea; color: #1e395b; }
.dl-bar button { display: flex; align-items: center; gap: 4px; }
.newfolder { margin-left: 29px; }
.viewbtn { margin-right: 22px; }
.dl-bar .viewbtn { gap: 10px; }
.dl-bar .help { justify-content: center; width: 16px; height: 16px; margin-left: 20px; border-radius: 8px; background: #0a5db0; color: #fff; font-weight: 700; }
.dl-body { display: flex; height: 299px; }
.dl-tree { width: 139px; padding-top: 8px; overflow: hidden; flex: none; }
.dl-tree li { display: flex; align-items: center; gap: 5px; height: 24px; white-space: nowrap; }
.l0 { padding-left: 24px; }
.l1 { padding-left: 32px; }
.l2 { padding-left: 40px; }
.dl-tree li.on { background: #d9d9d9; }
.dl-tree li.spaced { margin-top: 8px; }
.pin { margin: 0 3px 0 auto; }
.dl-v { margin-left: 1px; padding: 4px 0 3px; }
.dl-v .thumb { height: 90px; margin-top: 4px; }
.tiles { display: grid; grid-template-columns: repeat(auto-fill, 75px); align-content: start; flex: 1; padding: 13px 0 0 17px; row-gap: 12px; }
.tiles figure { margin: 0; display: flex; flex-direction: column; align-items: center; }
.tiles svg { width: 48px; height: 42px; overflow: visible; }
.tiles .pale svg { opacity: .5; }
figcaption { width: 67px; display: flex; justify-content: center; text-align: center; line-height: 15px; overflow-wrap: anywhere; margin-top: 1px; margin-bottom: -1px; }
figure:nth-child(10) figcaption, figure:nth-child(14) figcaption { width: 64px; }
.dl-foot { position: relative; height: 76px; padding: 9px 17px 0; background: #f0f0f0; }
.frow { display: flex; align-items: center; justify-content: flex-end; height: 24px; }
.frow label { margin-right: 5px; }
.combo { display: flex; align-items: center; width: 218px; height: 24px; padding: 0 3px; background: #fff; border: 1px solid #7a7a7a; }
.combo input { flex: 1; min-width: 0; }
.types { display: flex; align-items: center; width: 188px; height: 23px; margin-left: 12px; padding: 0 3px; background: #e3e3e3; border: 1px solid #adadad; }
.types select { appearance: none; flex: 1; min-width: 0; margin-right: 8px; overflow: hidden; font-size: 11px; }
.combo svg, .types svg { color: #555; }
.brow { margin-top: 6px; gap: 14px; padding-right: 1px; }
.btn { width: 86px; height: 24px; background: #e1e1e1; border: 1px solid #adadad; white-space: nowrap; }
.btn.wide { width: 119px; }
.btn.open { display: flex; align-items: center; border: 2px solid #1a76c8; }
.open span { flex: 1; }
.open i { width: 1px; height: 18px; background: #666; }
.open svg { margin: 0 1px; }
.grip { position: absolute; right: 3px; bottom: 1px; width: 9px; height: 9px; }

.mark { position: absolute; right: 46px; bottom: 46px; display: flex; align-items: center; gap: 5px; font: 700 30px "Liberation Sans Narrow", "Liberation Sans", sans-serif; color: rgba(255, 255, 255, .7); text-shadow: 0 0 3px rgba(120, 120, 120, .5); }
.mark svg { width: 56px; height: 64px; filter: drop-shadow(0 0 2px rgba(120, 120, 120, .5)); opacity: .7; }

.taskbar { position: absolute; left: 0; right: 0; bottom: 0; height: 40px; display: flex; align-items: center; background: rgba(0, 0, 0, .86); color: #fff; }
.start { display: flex; align-items: center; justify-content: center; width: 48px; height: 40px; }
.searchbox { display: flex; align-items: center; gap: 10px; width: 287px; height: 40px; margin-left: 1px; padding-left: 10px; background: #fff; border: 1px solid #b5b5b5; font-size: 15px; color: #333; }
.searchbox input { flex: 1; min-width: 0; line-height: 24px; height: 24px; }
.searchbox input::placeholder { color: #333; opacity: 1; font-size: 14px; }
.tb-item { display: flex; align-items: center; justify-content: center; width: 48px; height: 40px; }
.tb-item.active { margin-left: 3px; background: rgba(255, 255, 255, .2); border-bottom: 2px solid #76b9ed; }
.tb-item.running { width: 40px; margin-left: 5px; border-bottom: 2px solid #76b9ed; }
.tb-item.ff { margin-left: 5px; }
.tray { display: flex; gap: 8px; }
.clock { display: flex; flex-direction: column; align-items: center; width: 56px; margin: 0 16px 0 8px; line-height: 17px; }
.notify { margin-right: 20px; }
.peek { width: 1px; height: 40px; background: #555; margin-right: 4px; }
</style>
